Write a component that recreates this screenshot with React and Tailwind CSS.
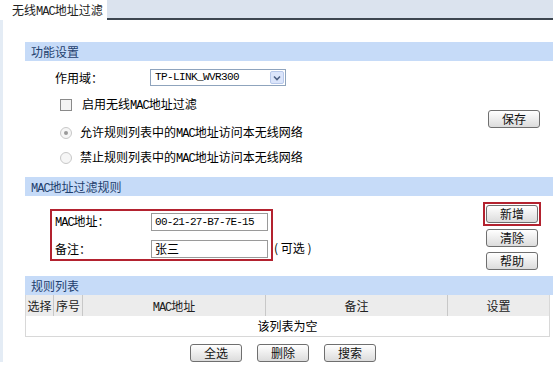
import React from "react";

const font = { fontFamily: '"Noto Sans CJK SC", "Liberation Sans", sans-serif' };
const mono = { fontFamily: '"Liberation Mono", "Noto Sans CJK SC", monospace' };

// narrow ascii, like the bitmap font in the original
function M({ children }) {
  return (
    <span className="text-[12px] tracking-[-1px]" style={mono}>
      {children}
    </span>
  );
}

function Btn({ children, className = "" }) {
  return (
    <button
      className={
        "h-[18px] w-[52px] rounded-[3px] border border-[#6f6f6f] bg-gradient-to-b from-white to-[#dcdcdc] text-[12px] leading-[16px] text-[#111] " +
        className
      }
    >
      {children}
    </button>
  );
}

function SectionHead({ children }) {
  return (
    <div className="h-[19px] whitespace-nowrap bg-[#c6dbf8] pl-[6px] text-[12px] leading-[19px] text-[#1f3f6e]">
      {children}
    </div>
  );
}

function Radio({ checked }) {
  return (
    <span className="flex h-[12px] w-[12px] items-center justify-center rounded-full border border-[#c8c8c8] bg-[#f6f6f6]">
      {checked && <span className="h-[4px] w-[4px] rounded-full bg-[#9a9a9a]" />}
    </span>
  );
}

export default function App() {
  return (
    <div className="h-[369px] w-[553px] overflow-hidden whitespace-nowrap bg-white text-[12px] text-black" style={font}>
      {/* tab strip */}
      <div className="flex h-[20px] bg-[#dbe3ee]">
        <div className="flex w-[107px] flex-col bg-white">
          <div className="pl-[12px] pt-[2px] text-[12px] leading-[15px] text-[#222]">
            无线<M>MAC</M>地址过滤
          </div>
          <div className="ml-[8px] mt-auto h-px w-[87px] bg-[#d0d0d0]" />
        </div>
        <div className="flex-1 border-b-2 border-[#3d4650]" />
      </div>

      <div className="border-l-[3px] border-[#e4ecf5] pl-[22px] pt-[22px]">
        {/* 功能设置 */}
        <SectionHead>功能设置</SectionHead>
        <div className="flex h-[116px]">
          <div className="flex-1">
            <div className="mt-[8px] flex h-[17px] items-center">
              <span className="ml-[30px] w-[95px]">作用域：</span>
              <div className="flex h-[17px] w-[136px] items-center border border-[#8fa4bd] bg-white">
                <span className="flex-1 pl-[4px] text-[11px] tracking-[-0.6px]" style={mono}>TP-LINK_WVR300</span>
                <span className="mr-px flex h-[13px] w-[14px] items-center justify-center rounded-[2px] border border-[#b7c8ea] bg-[#dbe5fb]">
                  <svg width="8" height="6" viewBox="0 0 8 6">
                    <path d="M1 1.5 L4 4.5 L7 1.5" stroke="#4d6185" strokeWidth="1.6" fill="none" />
                  </svg>
                </span>
              </div>
            </div>
            <div className="mt-[13px] flex h-[12px] items-center">
              <span className="ml-[35px] h-[12px] w-[12px] border border-[#8a8a8a] bg-[#f3f3f3]" />
              <span className="ml-[10px]">启用无线<M>MAC</M>地址过滤</span>
            </div>
            <div className="mt-[16px] flex h-[12px] items-center">
              <span className="ml-[35px]"><Radio checked /></span>
              <span className="ml-[8px]">允许规则列表中的<M>MAC</M>地址访问本无线网络</span>
            </div>
            <div className="mt-[13px] flex h-[12px] items-center">
              <span className="ml-[35px]"><Radio /></span>
              <span className="ml-[8px]">禁止规则列表中的<M>MAC</M>地址访问本无线网络</span>
            </div>
          </div>
          <div className="pr-[13px] pt-[49px]">
            <Btn>保存</Btn>
          </div>
        </div>

        {/* MAC地址过滤规则 */}
        <SectionHead><M>MAC</M>地址过滤规则</SectionHead>
        <div className="flex h-[80px]">
          <div className="flex flex-1 items-start pt-[13px]">
            <div className="ml-[25px] h-[52px] w-[223px] border-2 border-[#b3222f] px-[3px] pt-[2px]">
              <div className="flex h-[18px] items-center">
                <span className="w-[97px]"><M>MAC</M>地址：</span>
                <span className="flex h-[18px] w-[118px] items-center border border-[#9a9a9a] pl-[3px] text-[11px] tracking-[-0.8px]" style={mono}>
                  00-21-27-B7-7E-15
                </span>
              </div>
              <div className="mt-[9px] flex h-[18px] items-center">
                <span className="w-[97px]">备注：</span>
                <span className="flex h-[18px] w-[118px] items-center border border-[#9a9a9a] pl-[3px]">张三</span>
              </div>
            </div>
            <span className="ml-[1px] mt-[30px]">( 可选 )</span>
          </div>
          <div className="flex flex-col items-center pr-[12px] pt-[6px]">
            <div className="border-2 border-[#b3222f] p-px">
              <Btn>新增</Btn>
            </div>
            <Btn className="mt-[3px]">清除</Btn>
            <Btn className="mt-[5px]">帮助</Btn>
          </div>
        </div>

        {/* 规则列表 */}
        <SectionHead>规则列表</SectionHead>
        <div className="mr-[3px] border-x border-b border-[#d8d8d8]">
          <div className="flex h-[21px] bg-[#ececec] text-[#222]">
            <div className="w-[28px] border-r border-[#c8c8c8] text-center leading-[21px]">选择</div>
            <div className="w-[29px] border-r border-[#c8c8c8] text-center leading-[21px]">序号</div>
            <div className="w-[183px] border-r border-[#c8c8c8] text-center leading-[21px]"><M>MAC</M>地址</div>
            <div className="w-[182px] border-r border-[#c8c8c8] text-center leading-[21px]">备注</div>
            <div className="flex-1 text-center leading-[21px]">设置</div>
          </div>
          <div className="h-[20px] text-center leading-[20px]">该列表为空</div>
        </div>

        <div className="mt-[7px] flex gap-[15px] pl-[165px]">
          <Btn>全选</Btn>
          <Btn>删除</Btn>
          <Btn>搜索</Btn>
        </div>
      </div>
    </div>
  );
}
